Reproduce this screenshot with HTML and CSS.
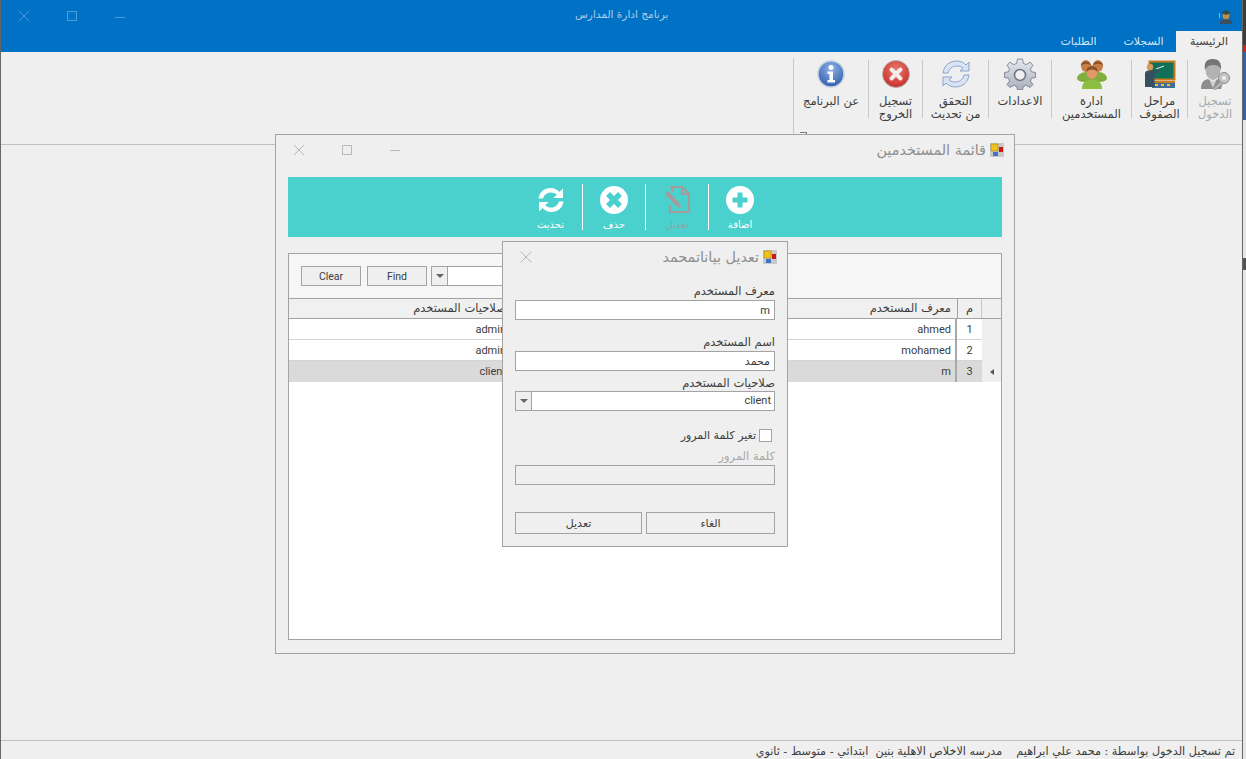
FILE: index.html
```html
<!DOCTYPE html>
<html lang="ar">
<head>
<meta charset="utf-8" />
<title>برنامج ادارة المدارس</title>
<link rel="stylesheet" href="styles.css">
</head>
<body>
<div class="desktop">
  <div class="app">
    <header class="titlebar">
      <div class="winctl">
        <span class="ctl"><svg width="12" height="12" viewBox="0 0 12 12"><path d="M1 1L11 11M11 1L1 11" /></svg></span>
        <span class="ctl"><svg width="12" height="12" viewBox="0 0 12 12"><path d="M1.5 1.5H10.5V10.5H1.5Z" /></svg></span>
        <span class="ctl"><svg width="12" height="12" viewBox="0 0 12 12"><path d="M1 7.5H11" /></svg></span>
      </div>
      <div class="apptitle">برنامج ادارة المدارس</div>
      <svg class="appicon" width="14" height="16" viewBox="0 0 14 16">
        <circle cx="8" cy="8" r="3.4" fill="#c98a3c" />
        <path d="M2 13.5C3 10.5 13 10.5 14 13.5V16H2Z" fill="#3d4f5c" />
        <path d="M3 4.5L8 2L13 4.5L8 7Z" fill="#2f4a50" />
        <path d="M1.5 5V10" stroke="#e8a020" stroke-width="1" />
      </svg>
    </header>
    <nav class="tabs">
      <span class="tab active">الرئيسية</span>
      <span class="tab">السجلات</span>
      <span class="tab">الطلبات</span>
    </nav>
    <section class="ribbon">
      <div class="group">
        <div class="item dim">
          <svg class="bigicon" width="32" height="32" viewBox="0 0 32 32">
            <path d="M2 31C2 24 5 22 9 21L14 24L19 21C21 21.500 23 22.500 24 24L22 31Z" fill="#8e8e8e" />
            <path d="M10 21L14 30L18 21L14 24Z" fill="#d0d0d0" />
            <ellipse cx="14" cy="12" rx="7.500" ry="10" fill="#b2b2b2" />
            <path d="M6 12C4.500 3 9 1 14 1C19 1 23 4 22 12C21 8 18 7 14 7C10 7 7.500 8.500 6 12Z" fill="#757575" />
            <circle cx="25" cy="20" r="5.500" fill="#c4c4c4" stroke="#8c8c8c" />
            <circle cx="25" cy="20" r="2" fill="#efefef" />
            <path d="M21.500 23.500L14 31L17 31.500L24 25.500Z" fill="#b8b8b8" stroke="#8c8c8c" stroke-width=".6" />
          </svg>
          <span class="label">تسجيل<br>الدخول</span>
        </div>
        <div class="item">
          <svg class="bigicon" width="32" height="32" viewBox="0 0 32 32">
            <rect x="5.500" y="3.500" width="25" height="18" fill="#12705a" stroke="#c67a1e" stroke-width="2" />
            <path d="M12 11L20 8" stroke="#e8efe8" stroke-width="1" />
            <rect x="7" y="23" width="24" height="2" fill="#c67a1e" />
            <rect x="8" y="25" width="23" height="5" fill="#3f6f99" />
            <path d="M11 26h3v2h-3zM17 26h3v2h-3zM23 26h3v2h-3z" fill="#f0c040" />
            <circle cx="6" cy="9" r="3.200" fill="#d89a58" />
            <path d="M1 29V16C1 13 3 12.500 6 12.500C9 12.500 10 13 14 11L15 13C12 15.500 11 16 10.500 16.500V29Z" fill="#36505f" />
          </svg>
          <span class="label">مراحل<br>الصفوف</span>
        </div>
        <div class="item">
          <svg class="bigicon" width="32" height="32" viewBox="0 0 32 32">
            <path d="M1 20C2 15 8 14 11 14H21C25 14 30 15 31 20C31 23 26 24 24 24H8C6 24 1 23 1 20Z" fill="#7fae3c" />
            <ellipse cx="10" cy="8" rx="5" ry="6" fill="#c77f4a" />
            <ellipse cx="22" cy="8" rx="5" ry="6" fill="#c77f4a" />
            <path d="M5 8C4 2 15 2 15 8C13 5 7 5 5 8ZM17 8C16 2 27 2 27 8C25 5 19 5 17 8Z" fill="#8a5228" />
            <path d="M6 31C6 24 10 22 16 22C22 22 26 24 26 31Z" fill="#8dbf42" />
            <ellipse cx="16" cy="14" rx="5.500" ry="7" fill="#e0986a" />
            <path d="M10.500 14C9.500 6 22.500 6 21.500 14C19 10.500 13 10.500 10.500 14Z" fill="#8a5228" />
          </svg>
          <span class="label">ادارة<br>المستخدمين</span>
        </div>
        <div class="item">
          <svg class="bigicon" width="32" height="32" viewBox="0 0 32 32">
            <defs>
              <linearGradient id="gearfill" x1="0" y1="0" x2="0" y2="1"><stop offset="0" stop-color="#e6e9f0" /><stop offset="1" stop-color="#a9aebb" /></linearGradient>
            </defs>
            <path d="M13.500 1H18.500L19.300 5.400L22.300 6.600L26 4L29 7.500L26.400 11L27.600 13.800L31.500 14.500V19.500L27.600 20.200L26.400 23L29 26.500L26 29.500L22.300 27.400L19.300 28.600L18.500 32H13.500L12.700 28.600L9.700 27.400L6 29.500L3 26.500L5.600 23L4.400 20.200L.5 19.500V14.500L4.400 13.800L5.600 11L3 7.500L6 4L9.700 6.600L12.700 5.400Z" fill="url(#gearfill)" stroke="#6f7585" stroke-width=".8" />
            <circle cx="16" cy="17" r="5.500" fill="#efefef" stroke="#6f7585" stroke-width="1.500" />
          </svg>
          <span class="label">الاعدادات</span>
        </div>
        <div class="item">
          <svg class="bigicon" width="32" height="32" viewBox="0 0 32 32">
            <path d="M3 15C4 7 10 3 17 3C21 3 24 5 26 7L29 4V13H20L23 10C21 8.500 19 8 17 8C12.500 8 9 10.500 8 15Z" fill="#d9e3f4" stroke="#8ea3cc" />
            <path d="M29 17C28 25 22 29 15 29C11 29 8 27 6 25L3 28V19H12L9 22C11 23.500 13 24 15 24C19.500 24 23 21.500 24 17Z" fill="#d9e3f4" stroke="#8ea3cc" />
          </svg>
          <span class="label">التحقق<br>من تحديث</span>
        </div>
        <div class="item">
          <svg class="bigicon" width="32" height="32" viewBox="0 0 32 32">
            <defs>
              <radialGradient id="redfill" cx=".5" cy=".35" r=".7"><stop offset="0" stop-color="#ee7a70" /><stop offset="1" stop-color="#c22a22" /></radialGradient>
            </defs>
            <circle cx="16" cy="16" r="13.500" fill="url(#redfill)" stroke="#b5b0b0" />
            <path d="M11.500 11.500L20.500 20.500M20.500 11.500L11.500 20.500" stroke="#f4ecec" stroke-width="4" stroke-linecap="round" />
          </svg>
          <span class="label">تسجيل<br>الخروج</span>
        </div>
        <div class="item last">
          <svg class="bigicon" width="32" height="32" viewBox="0 0 32 32">
            <defs>
              <radialGradient id="bluefill" cx=".5" cy=".3" r=".75"><stop offset="0" stop-color="#8fb2e6" /><stop offset="1" stop-color="#2c5aa8" /></radialGradient>
            </defs>
            <circle cx="16" cy="16" r="13" fill="url(#bluefill)" stroke="#c3cfe4" stroke-width="1.500" />
            <circle cx="16" cy="9.500" r="2.500" fill="#fff" />
            <path d="M12.500 13.500H18V22H20V24.500H12.500V22H14.500V16H12.500Z" fill="#fff" />
          </svg>
          <span class="label">عن البرنامج</span>
        </div>
      </div>
      <span class="collapse"></span>
    </section>
    <main class="workspace"></main>
    <footer class="status">تم تسجيل الدخول بواسطة : محمد علي ابراهيم &nbsp;&nbsp; مدرسه الاخلاص الاهلية بنين &nbsp;ابتدائي - متوسط - ثانوي</footer>
  </div>
  <div class="edge"></div>

  <section class="window users">
    <div class="wintitle">
      <div class="caption">
        <svg width="14" height="14" viewBox="0 0 14 14"><rect width="14" height="14" fill="#c9c9c9" /><rect x="1" y="1" width="7" height="7" fill="#f2c21c" stroke="#a87c10" stroke-width=".6" /><rect x="9" y="4" width="4" height="5" fill="#c81818" /><rect x="3" y="9" width="5" height="4" fill="#3f72c8" /></svg>
        <span>قائمة المستخدمين</span>
      </div>
      <div class="winctl gray">
        <span class="ctl"><svg width="12" height="12" viewBox="0 0 12 12"><path d="M1 1L11 11M11 1L1 11" /></svg></span>
        <span class="ctl"><svg width="12" height="12" viewBox="0 0 12 12"><path d="M1.500 1.500H10.500V10.500H1.500Z" /></svg></span>
        <span class="ctl"><svg width="12" height="12" viewBox="0 0 12 12"><path d="M1 6.500H11" /></svg></span>
      </div>
    </div>
    <div class="toolbar">
      <div class="tool">
        <svg width="28" height="28" viewBox="0 0 28 28"><circle cx="14" cy="14" r="14" fill="#fff" /><path d="M14 6.500V21.500M6.500 14H21.500" stroke="#4ad1cd" stroke-width="5" /></svg>
        <span>اضافة</span>
      </div>
      <div class="tool off">
        <svg width="28" height="28" viewBox="0 0 28 28"><path d="M7 1H19L26 8V26H7V19M9 1V6M19 1V8H26" fill="none" stroke="#a8999b" stroke-width="2" /><path d="M2 8L5 5L17 18L18 22L13 20Z" fill="#a8999b" /></svg>
        <span>تعديل</span>
      </div>
      <div class="tool">
        <svg width="28" height="28" viewBox="0 0 28 28"><circle cx="14" cy="14" r="14" fill="#fff" /><path d="M8 8L20 20M20 8L8 20" stroke="#4ad1cd" stroke-width="5.500" /></svg>
        <span>حذف</span>
      </div>
      <div class="tool last">
        <svg width="28" height="28" viewBox="0 0 28 28"><path d="M1.500 12.500C2.500 6 7.500 2 13.500 2C17.500 2 20.500 3.800 22.500 6L26 2.500V12H16.500L19.800 8.800C18.300 7.300 16 6.500 13.800 6.500C10 6.500 7 9 6 12.500Z" fill="#fff" /><path d="M26.500 15.500C25.500 22 20.500 26 14.500 26C10.500 26 7.500 24.200 5.500 22L2 25.500V16H11.500L8.200 19.200C9.700 20.700 12 21.500 14.200 21.500C18 21.500 21 19 22 15.500Z" fill="#fff" /></svg>
        <span>تحديث</span>
      </div>
    </div>
    <div class="panel">
      <div class="filter">
        <button class="btn filterbtn lat" type="button">Clear</button>
        <button class="btn filterbtn lat" type="button">Find</button>
        <div class="search"><span class="arrowbox"><i class="arrow"></i></span><input class="searchbox" type="text" /></div>
      </div>
      <div class="row head">
        <span class="indicator"></span>
        <span class="num">م</span>
        <span class="cell">معرف المستخدم</span>
        <span class="cell">صلاحيات المستخدم</span>
      </div>
      <div class="row">
        <span class="indicator"></span>
        <span class="num lat">1</span>
        <span class="cell lat">ahmed</span>
        <span class="cell lat">admin</span>
      </div>
      <div class="row">
        <span class="indicator"></span>
        <span class="num lat">2</span>
        <span class="cell lat">mohamed</span>
        <span class="cell lat">admin</span>
      </div>
      <div class="row selected">
        <span class="indicator"><i class="pointer"></i></span>
        <span class="num lat">3</span>
        <span class="cell lat">m</span>
        <span class="cell lat">client</span>
      </div>
    </div>
  </section>

  <section class="window dialog">
    <div class="wintitle short">
      <div class="caption">
        <svg width="14" height="14" viewBox="0 0 14 14"><rect width="14" height="14" fill="#c9c9c9" /><rect x="1" y="1" width="7" height="7" fill="#f2c21c" stroke="#a87c10" stroke-width=".6" /><rect x="9" y="4" width="4" height="5" fill="#c81818" /><rect x="3" y="9" width="5" height="4" fill="#3f72c8" /></svg>
        <span>تعديل بياناتمحمد</span>
      </div>
      <div class="winctl gray">
        <span class="ctl"><svg width="14" height="14" viewBox="0 0 14 14"><path d="M1.500 1.500L12.500 12.500M12.500 1.500L1.500 12.500" /></svg></span>
      </div>
    </div>
    <form class="editform">
      <label class="fieldlabel">معرف المستخدم</label>
      <input class="textbox lat" type="text" value="m" />
      <label class="fieldlabel second">اسم المستخدم</label>
      <input class="textbox" type="text" value="محمد" />
      <label class="fieldlabel third">صلاحيات المستخدم</label>
      <div class="combo">
        <span class="comboval lat">client</span>
        <span class="arrowbox"><i class="arrow"></i></span>
      </div>
      <div class="checkrow"><input class="check" type="checkbox" /><span>تغير كلمة المرور</span></div>
      <label class="fieldlabel muted">كلمة المرور</label>
      <input class="textbox" type="password" disabled />
      <div class="actions">
        <button class="btn cancel" type="button">الغاء</button>
        <button class="btn save" type="button">تعديل</button>
      </div>
    </form>
  </section>
</div>
</body>
</html>
```

FILE: styles.css
```css
* {
  box-sizing: border-box;
}

body {
  margin: 0;
  font-family: "DejaVu Sans", sans-serif;
  font-size: 11.5px;
  color: #3c3c3c;
  background-color: #e8e8e8;
}

.lat {
  font-family: Roboto, "DejaVu Sans", sans-serif;
  font-size: 11px;
}

.desktop {
  position: relative;
  display: flex;
  width: 1246px;
  height: 759px;
  overflow: hidden;
}

.app {
  display: flex;
  flex-direction: column;
  width: 1243px;
  height: 759px;
  background-color: #efefef;
  border-left: 1px solid #666;
  border-right: 1px solid #666;
}

.edge {
  flex: 1;
  background: linear-gradient(#3c3c3c 0, #3c3c3c 45px, #d02020 45px, #d02020 52px, #2f62b0 52px, #2f62b0 120px, #e6e6e6 120px, #e6e6e6 258px, #555 258px, #555 270px, #e6e6e6 270px);
}

/* title bar */
.titlebar {
  position: relative;
  display: flex;
  align-items: center;
  height: 31px;
  background-color: #0072c6;
}

.winctl {
  display: flex;
}

.ctl {
  display: flex;
  justify-content: center;
  align-items: center;
  width: 48px;
  height: 30px;
}

.ctl svg {
  fill: none;
  stroke: #4d9bdb;
  stroke-width: 1;
}

.titlebar .winctl {
  margin-left: -1px;
}

.apptitle {
  position: absolute;
  left: 574px;
  top: 8px;
  font-size: 10.5px;
  color: #a9cdea;
}

.appicon {
  margin-left: auto;
  margin-right: 10px;
  margin-top: 1px;
}

.tabs {
  display: flex;
  direction: rtl;
  height: 21px;
  background-color: #0072c6;
  color: #d5e6f5;
  font-size: 11px;
}

.tab {
  width: 65px;
  line-height: 21px;
  text-align: center;
}

.tab.active {
  width: 66px;
  background-color: #efefef;
  color: #3c3c3c;
}

/* ribbon */
.ribbon {
  position: relative;
  display: flex;
  direction: rtl;
  height: 93px;
  padding-top: 6px;
  border-bottom: 1px solid #c0c0c0;
}

.group {
  display: grid;
  grid-template-columns: 55px 56px 80px 63px 66px 54px 74px;
  align-items: start;
  width: 449px;
  height: 76px;
  padding-top: 2px;
  border-left: 1px solid #c8c8c8;
}

.item {
  display: flex;
  flex-direction: column;
  align-items: center;
  height: 58px;
  border-left: 1px solid #c8c8c8;
}

.item.last {
  border-left: none;
}

.bigicon {
  flex-shrink: 0;
  margin-top: -2px;
}

.label {
  margin-top: 5px;
  line-height: 13px;
  text-align: center;
  white-space: nowrap;
}

.item.dim .label {
  color: #a8a8a8;
}

.collapse {
  position: absolute;
  left: 799px;
  top: 80px;
  width: 7px;
  height: 3px;
  border-top: 1px solid #777;
  border-right: 1px solid #777;
}

.workspace {
  flex: 1;
}

.status {
  direction: rtl;
  height: 19px;
  padding-right: 7px;
  border-top: 1px solid #c0c0c0;
  font-size: 11.2px;
  line-height: 21px;
  white-space: nowrap;
}

/* floating windows */
.window {
  position: absolute;
  background-color: #efefef;
  border: 1px solid #a3a3a3;
}

.window.users {
  left: 275px;
  top: 134px;
  width: 740px;
  height: 520px;
}

.window.dialog {
  left: 502px;
  top: 241px;
  width: 286px;
  height: 306px;
}

.wintitle {
  display: flex;
  direction: rtl;
  justify-content: space-between;
  height: 42px;
  padding-right: 10px;
}

.wintitle.short {
  height: 38px;
}

.wintitle .winctl {
  direction: ltr;
  margin-left: -1px;
}

.caption {
  display: flex;
  align-items: center;
  gap: 4px;
  height: 30px;
  font-size: 14.4px;
  color: #8e8e8e;
}

.winctl.gray svg {
  stroke: #b8b8b8;
}

/* teal toolbar */
.toolbar {
  display: flex;
  direction: rtl;
  justify-content: center;
  align-items: center;
  height: 60px;
  margin: 0 12px;
  background-color: #4ad1cd;
}

.tool {
  display: flex;
  flex-direction: column;
  align-items: center;
  width: 63px;
  height: 46px;
  border-left: 1px solid #fff;
  color: #fff;
  font-size: 10px;
}

.tool svg {
  margin-top: 2px;
}

.tool span {
  margin-top: 5px;
}

.tool.last {
  border-left: none;
}

.tool.off span {
  color: #8fa6a6;
}

/* user list */
.panel {
  height: 387px;
  margin: 16px 12px 0;
  background-color: #fff;
  border: 1px solid #a3a3a3;
}

.filter {
  display: flex;
  height: 44px;
  padding: 12px 0 0 12px;
  background-color: #f6f6f6;
}

.btn {
  background-color: #efefef;
  border: 1px solid #a3a3a3;
  color: #3c3c3c;
  font-family: "DejaVu Sans", sans-serif;
  font-size: 11px;
}

.btn.lat {
  font-family: Roboto, sans-serif;
  font-size: 10.5px;
}

.filterbtn {
  width: 60px;
  height: 20px;
  padding: 1px 0 0;
  margin-right: 6px;
}

.search {
  display: flex;
  height: 20px;
  margin-left: -2px;
  border: 1px solid #a3a3a3;
  background-color: #fff;
}

.searchbox {
  width: 180px;
  border: none;
  padding: 0;
}

.arrowbox {
  display: flex;
  flex-shrink: 0;
  justify-content: center;
  align-items: center;
  width: 16px;
  background-color: #efefef;
  border-right: 1px solid #a3a3a3;
}

.arrow {
  width: 0;
  height: 0;
  border-left: 4px solid transparent;
  border-right: 4px solid transparent;
  border-top: 4px solid #666;
}

.row {
  display: grid;
  grid-template-columns: 19px 25px 447px 1fr;
  direction: rtl;
  height: 21px;
  border-bottom: 1px solid #d4d4d4;
  line-height: 21px;
}

.row.head {
  background-color: #f0f0f0;
  border-top: 1px solid #a3a3a3;
  border-bottom-color: #a3a3a3;
  line-height: 19px;
}

.row.selected {
  background-color: #dadada;
  border-bottom: none;
}

.indicator {
  display: flex;
  align-items: center;
  justify-content: center;
  background-color: #efefef;
}

.num {
  text-align: center;
}

.row.head .num {
  border-left: 1px solid #a3a3a3;
  border-right: 1px solid #c8c8c8;
}

.cell {
  padding-right: 4px;
  overflow: hidden;
  white-space: nowrap;
}

.row > .num + .cell {
  border-right: 2px solid #a8a8a8;
}

.row.head > .num + .cell {
  border-right: none;
  padding-right: 6px;
}

.pointer {
  width: 0;
  height: 0;
  border-top: 3px solid transparent;
  border-bottom: 3px solid transparent;
  border-right: 4px solid #555;
}

/* edit dialog */
.editform {
  display: flex;
  flex-direction: column;
  padding: 0 12px;
  direction: rtl;
}

.fieldlabel {
  height: 14px;
  margin: 4px 0 2px;
  line-height: 14px;
}

.fieldlabel.second {
  margin-top: 15px;
}

.fieldlabel.third {
  margin-top: 5px;
  margin-bottom: 1px;
}

.fieldlabel.muted {
  margin-top: 7px;
  color: #a8a8a8;
}

.textbox {
  height: 20px;
  padding: 0 4px;
  border: 1px solid #a3a3a3;
  background-color: #fff;
  font-family: "DejaVu Sans", sans-serif;
  font-size: 11px;
  color: #3c3c3c;
  text-align: right;
}

.textbox.lat {
  font-family: Roboto, sans-serif;
  font-size: 11px;
}

.textbox:disabled {
  background-color: #efefef;
}

.combo {
  display: flex;
  direction: ltr;
  flex-shrink: 0;
  height: 20px;
  border: 1px solid #a3a3a3;
  background-color: #fff;
  flex-direction: row-reverse;
}

.comboval {
  flex: 1;
  padding-right: 3px;
  line-height: 18px;
  text-align: right;
}

.checkrow {
  display: flex;
  align-items: center;
  gap: 3px;
  height: 13px;
  margin: 18px 3px 0 0;
  font-size: 11px;
}

.check {
  appearance: none;
  width: 13px;
  height: 13px;
  margin: 0;
  background-color: #fff;
  border: 1px solid #a3a3a3;
}

.actions {
  display: flex;
  gap: 4px;
  margin-top: 27px;
}

.actions .btn {
  height: 22px;
}

.cancel {
  width: 129px;
}

.save {
  width: 127px;
}
```
